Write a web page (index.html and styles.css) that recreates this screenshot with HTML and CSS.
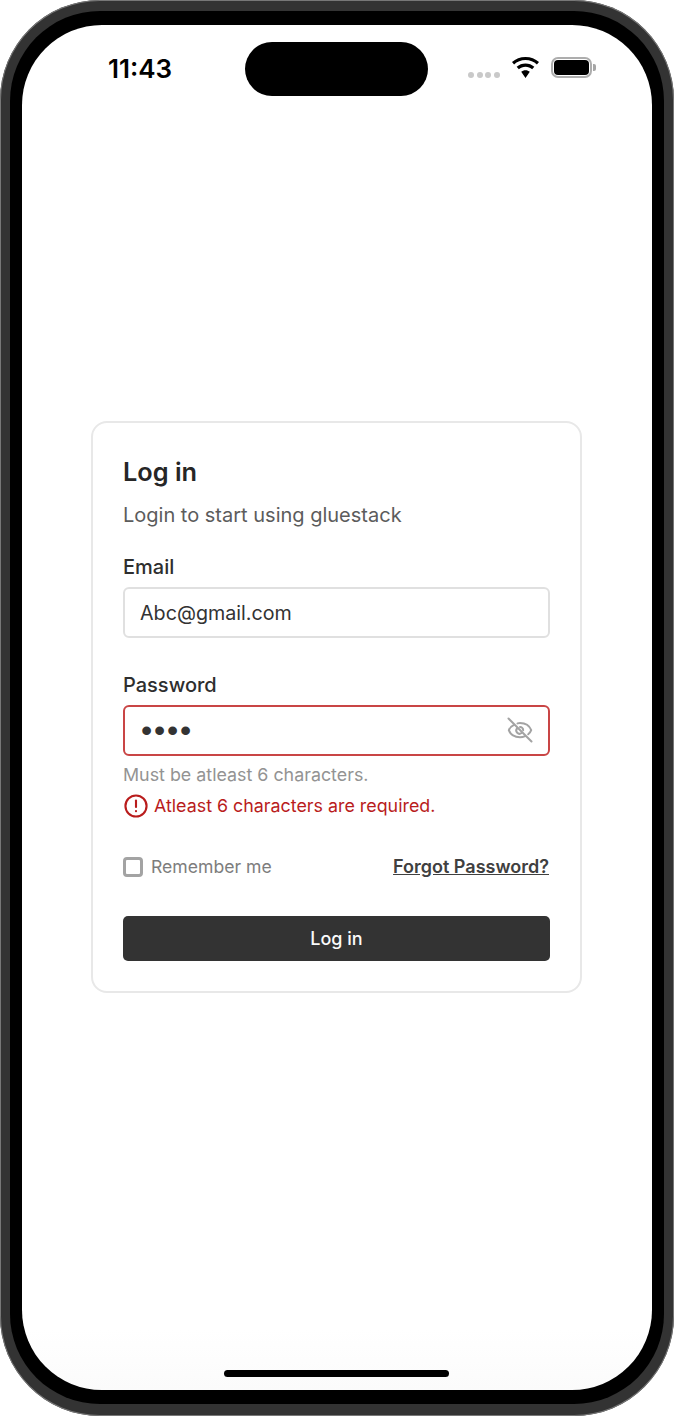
FILE: index.html
```html
<!DOCTYPE html>
<html lang="en">
<head>
<meta charset="utf-8">
<title>Log in</title>
<link rel="stylesheet" href="styles.css">
</head>
<body>
<div class="phone">
  <div class="bezel">
    <div class="screen">
      <header class="status">
        <span class="time">11:43</span>
        <div class="island"></div>
        <div class="status-right">
          <div class="signal"><i></i><i></i><i></i><i></i></div>
          <svg class="wifi" width="27" height="21" viewBox="1.800 0.400 24.400 19.400" preserveAspectRatio="none"><path d="M14 3.200c4 0 7.600 1.600 10.300 4.100l1.900-2.200C23 2 18.700.4 14 .4S5 2 1.800 5.100l1.900 2.200C6.400 4.800 10 3.200 14 3.200z"/><path d="M14 9.400c2.300 0 4.400.9 6 2.300l2-2.200c-2.200-2-5-3.100-8-3.100s-5.800 1.100-8 3.100l2 2.200c1.600-1.400 3.700-2.300 6-2.300z"/><path d="M14 12.600c-1.500 0-2.900.6-3.900 1.500L14 19.800l3.900-5.700c-1-.9-2.400-1.500-3.900-1.500z"/></svg>
          <div class="battery"><div class="battery-fill"></div></div>
          <div class="battery-cap"></div>
        </div>
      </header>
      <main class="content">
        <form class="card">
          <h1 class="title">Log in</h1>
          <p class="subtitle">Login to start using gluestack</p>
          <div class="field email-field">
            <div class="label">Email</div>
            <div class="input"><span class="value">Abc@gmail.com</span></div>
          </div>
          <div class="field password-field">
            <div class="label">Password</div>
            <div class="input input-error">
              <span class="value dots">••••</span>
              <svg class="eye" width="26" height="26" viewBox="0 0 26 26" fill="none" stroke="#a3a3a3" stroke-width="2" stroke-linecap="round" stroke-linejoin="round"><path d="M7 7.800C3.900 9.200 2.300 11.700 1.800 13.200 3.500 17.500 8 20.200 13 20.200c1.900 0 3.600-.4 5.200-1.100"/><path d="M10.500 6.400c.8-.2 1.600-.3 2.500-.3 5 0 9.500 2.700 11.200 7.100-.5 1.400-1.500 2.900-3 4.100"/><path d="M13 10a3.200 3.200 0 0 1 3.200 3.200"/><path d="M10 11.500a3.200 3.200 0 0 0 4.500 4.500"/><path d="M1.500 1.500l23 23"/></svg>
            </div>
            <div class="helper">Must be atleast 6 characters.</div>
            <div class="error">
              <svg class="alert" width="24" height="24" viewBox="0 0 25 25" fill="none" stroke="#b91c1c" stroke-width="2.200" stroke-linecap="round"><circle cx="12.500" cy="12.500" r="11"/><path d="M12.500 6.800v6.700"/><path d="M12.500 17.800v.2"/></svg>
              <span>Atleast 6 characters are required.</span>
            </div>
          </div>
          <div class="options">
            <label class="remember"><span class="checkbox"></span><span>Remember me</span></label>
            <a class="forgot">Forgot Password?</a>
          </div>
          <div class="button">Log in</div>
        </form>
      </main>
      <footer class="home-bar"><div class="home-indicator"></div></footer>
    </div>
  </div>
</div>
</body>
</html>
```
FILE: styles.css
```css
* { box-sizing: border-box; }
html, body { margin: 0; padding: 0; background: #fff; }
body { width: 674px; height: 1416px; font-family: Inter, "Liberation Sans", sans-serif; overflow: hidden; }

.phone {
  width: 674px;
  height: 1416px;
  padding: 11px 10px 12px;
  border-radius: 100px;
  background: #333;
  box-shadow: inset 0 0 0 1px #777;
}
.bezel {
  height: 100%;
  padding: 14px 12px 14px;
  border-radius: 90px;
  background: #000;
}
.screen {
  height: 100%;
  display: flex;
  flex-direction: column;
  background: linear-gradient(#fff calc(100% - 60px), #fbfbfb);
  border-radius: 80px;
  overflow: hidden;
}

.status {
  flex: none;
  height: 71px;
  padding: 17px 0 0 86px;
  display: flex;
  align-items: flex-start;
}
.time {
  width: 137px;
  padding-top: 11px;
  font-size: 26px;
  line-height: 32px;
  font-weight: 600;
  color: #000;
}
.island {
  width: 183px;
  height: 54px;
  border-radius: 27px;
  background: #000;
}
.status-right {
  margin-left: 40px;
  padding-top: 15px;
  display: flex;
  align-items: flex-start;
}
.signal {
  display: flex;
  gap: 2.600px;
  padding-top: 15px;
}
.signal i {
  width: 6px;
  height: 6px;
  border-radius: 50%;
  background: #c9c9c9;
}
.wifi { margin-left: 12px; fill: #000; }
.battery {
  width: 41px;
  height: 21px;
  margin-left: 12px;
  padding: 1px;
  border: 2px solid #adadad;
  border-radius: 7px;
}
.battery-fill {
  height: 100%;
  border-radius: 4px;
  background: #000;
}
.battery-cap {
  width: 3px;
  height: 7px;
  margin: 7px 0 0 1px;
  border-radius: 0 2px 2px 0;
  background: #a6a6a6;
}

.content {
  flex: 1;
  min-height: 0;
  padding: 0 69px;
  margin-top: -71px;
  margin-bottom: -18px;
  display: flex;
  align-items: center;
}
.card {
  width: 491px;
  height: 572px;
  padding: 32px 30px 0;
  border: 2px solid #e8e8e8;
  border-radius: 16px;
  background: #fff;
}
.title {
  margin: 0;
  font-size: 25.300px;
  line-height: 34px;
  font-weight: 600;
  color: #262626;
}
.subtitle {
  margin: 11px 0 0;
  font-size: 20px;
  line-height: 30px;
  color: #5c5c5c;
}
.field { display: flex; flex-direction: column; }
.email-field { margin-top: 22px; }
.password-field { margin-top: 32px; }
.label {
  font-size: 20px;
  line-height: 30px;
  font-weight: 500;
  color: #2e2e2e;
}
.input {
  height: 51px;
  margin-top: 5px;
  padding: 0 15px;
  display: flex;
  align-items: center;
  justify-content: space-between;
  border: 2px solid #e0e0e0;
  border-radius: 6px;
}
.input-error { border-color: #c94545; }
.value {
  padding-top: 1px;
  font-size: 19.700px;
  line-height: 30px;
  color: #333;
}
.dots {
  margin-left: 1px;
  padding-top: 0;
  font-family: "Liberation Sans", sans-serif;
  font-size: 32px;
  letter-spacing: 1.800px;
}
.eye { margin-right: 0; }
.helper {
  margin-top: 6px;
  font-size: 17.850px;
  line-height: 26px;
  color: #939393;
}
.error {
  margin-top: 5px;
  display: flex;
  align-items: center;
  gap: 6px;
  font-size: 17.850px;
  line-height: 26px;
  color: #b91c1c;
}
.alert { margin-left: 1px; }
.options {
  margin-top: 35px;
  display: flex;
  align-items: center;
  justify-content: space-between;
}
.remember {
  display: flex;
  align-items: center;
  gap: 8px;
  font-size: 17.600px;
  line-height: 26px;
  color: #7d7d7d;
}
.checkbox {
  width: 20px;
  height: 20px;
  border: 3px solid #a3a3a3;
  border-radius: 4px;
}
.forgot {
  margin-right: 1px;
  font-size: 18px;
  line-height: 26px;
  font-weight: 600;
  color: #404040;
  text-decoration: underline;
}
.button {
  height: 45px;
  margin-top: 36px;
  display: flex;
  align-items: center;
  justify-content: center;
  border-radius: 5px;
  background: #333;
  color: #fafafa;
  font-size: 18px;
  font-weight: 500;
}

.home-bar {
  flex: none;
  height: 20px;
  display: flex;
  justify-content: center;
}
.home-indicator {
  width: 225px;
  height: 7px;
  margin-right: 2px;
  border-radius: 4px;
  background: #000;
}
```
